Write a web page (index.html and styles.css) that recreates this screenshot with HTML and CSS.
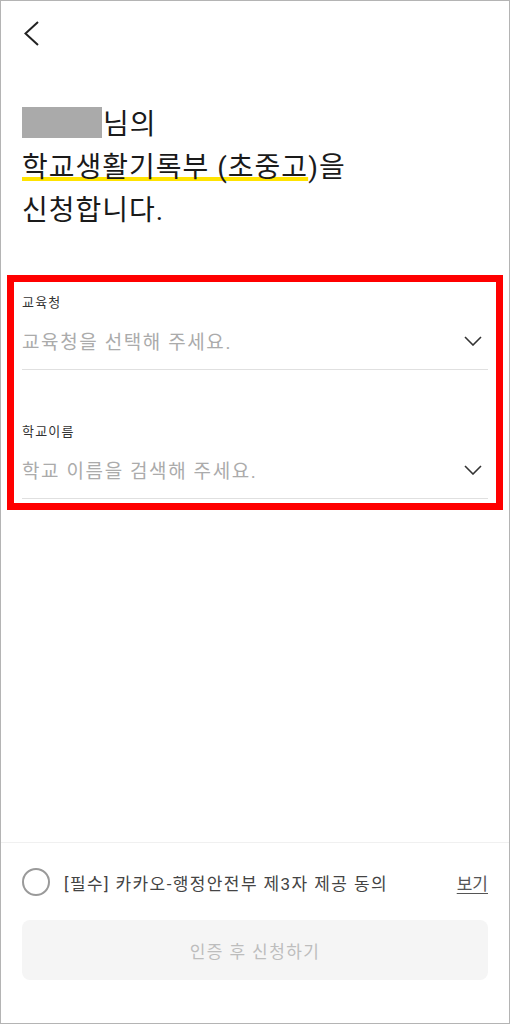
FILE: index.html
```html
<!DOCTYPE html>
<html lang="ko">
<head>
    <meta charset="UTF-8">
    <title>학교생활기록부 신청</title>
    <link rel="stylesheet" href="styles.css">
</head>
<body>
    <div class="screen">
        <header class="top-bar">
            <svg class="back-icon" viewBox="0 0 16 26" fill="none" stroke="currentColor">
                <polyline points="14,1 1.5,12.5 14,24" stroke-width="2" stroke-linejoin="miter"/>
            </svg>
        </header>

        <h1 class="title">
            <span class="name-mask"></span>님의<br>
            <span class="highlight">학교생활기록부 (초중고</span>)을<br>
            신청합니다.
        </h1>

        <div class="form-area">
            <div class="form-box">
                <div class="field">
                    <div class="field-label">교육청</div>
                    <div class="field-select">
                        <span class="placeholder">교육청을 선택해 주세요.</span>
                        <svg class="chevron" viewBox="0 0 18 10" fill="none" stroke="currentColor">
                            <polyline points="1,1 9,9 17,1" stroke-width="1.6"/>
                        </svg>
                    </div>
                </div>
                <div class="field field-next">
                    <div class="field-label">학교이름</div>
                    <div class="field-select">
                        <span class="placeholder">학교 이름을 검색해 주세요.</span>
                        <svg class="chevron" viewBox="0 0 18 10" fill="none" stroke="currentColor">
                            <polyline points="1,1 9,9 17,1" stroke-width="1.6"/>
                        </svg>
                    </div>
                </div>
            </div>
        </div>

        <footer class="footer">
            <div class="agree-row">
                <span class="check-circle"></span>
                <span class="agree-text">[필수] 카카오-행정안전부 제3자 제공 동의</span>
                <a class="agree-link">보기</a>
            </div>
            <button class="submit-btn" disabled>인증 후 신청하기</button>
        </footer>
    </div>
</body>
</html>
```

FILE: styles.css
```css
* {
    margin: 0;
    padding: 0;
    box-sizing: border-box;
}

body {
    font-family: Roboto, "Noto Sans CJK KR", sans-serif;
    background: #ffffff;
    color: #1a1a1a;
    -webkit-font-smoothing: antialiased;
}

/* Phone frame */
.screen {
    width: 510px;
    height: 1024px;
    border: 1px solid #b4b4b4;
    display: flex;
    flex-direction: column;
    overflow: hidden;
}

/* Back button */
.top-bar {
    padding: 20px 0 0 23px;
    height: 47px;
}

.back-icon {
    display: block;
    width: 16px;
    height: 26px;
    color: #222;
}

/* Heading */
.title {
    margin-top: 55px;
    padding-left: 21px;
    font-size: 28px;
    font-weight: 400;
    line-height: 43px;
    letter-spacing: 1px;
    color: #1a1a1a;
}

.name-mask {
    display: inline-block;
    width: 80px;
    height: 31px;
    background: #aaaaaa;
    vertical-align: -4px;
    margin-right: 1px;
}

.highlight {
    text-decoration: underline;
    text-decoration-color: #ffe300;
    text-decoration-thickness: 4px;
    text-underline-offset: 0;
    text-decoration-skip-ink: none;
}

/* Form */
.form-area {
    flex: 1;
    padding-top: 43px;
}

.form-box {
    margin: 0 6px;
    border: 7px solid #ff0000;
    padding: 12px 8px 4px 8px;
}

.field-label {
    font-size: 13px;
    line-height: 18px;
    letter-spacing: 1.2px;
    color: #333;
}

.field-next {
    margin-top: 53px;
}

.field-select {
    height: 58px;
    display: flex;
    align-items: center;
    justify-content: space-between;
    border-bottom: 1px solid #e0e0e0;
}

.placeholder {
    font-size: 19px;
    color: #ababab;
    letter-spacing: 1.6px;
}

.chevron {
    width: 18px;
    height: 10px;
    margin-right: 6px;
    color: #333;
}

/* Bottom area */
.footer {
    border-top: 1px solid #f0f0f0;
    padding: 25px 21px 43px 21px;
}

.agree-row {
    display: flex;
    align-items: center;
    height: 28px;
}

.check-circle {
    width: 28px;
    height: 28px;
    border: 2px solid #9a9a9a;
    border-radius: 50%;
    flex-shrink: 0;
}

.agree-text {
    margin-left: 14px;
    font-size: 17px;
    letter-spacing: 1.4px;
    color: #444;
    flex: 1;
}

.agree-link {
    font-size: 17px;
    color: #555;
    text-decoration: underline;
    text-underline-offset: 3px;
}

.submit-btn {
    margin-top: 24px;
    width: 100%;
    height: 60px;
    border: none;
    border-radius: 8px;
    background: #f5f5f5;
    color: #bdbdbd;
    font-family: inherit;
    font-size: 17px;
    letter-spacing: 1.4px;
}
```
